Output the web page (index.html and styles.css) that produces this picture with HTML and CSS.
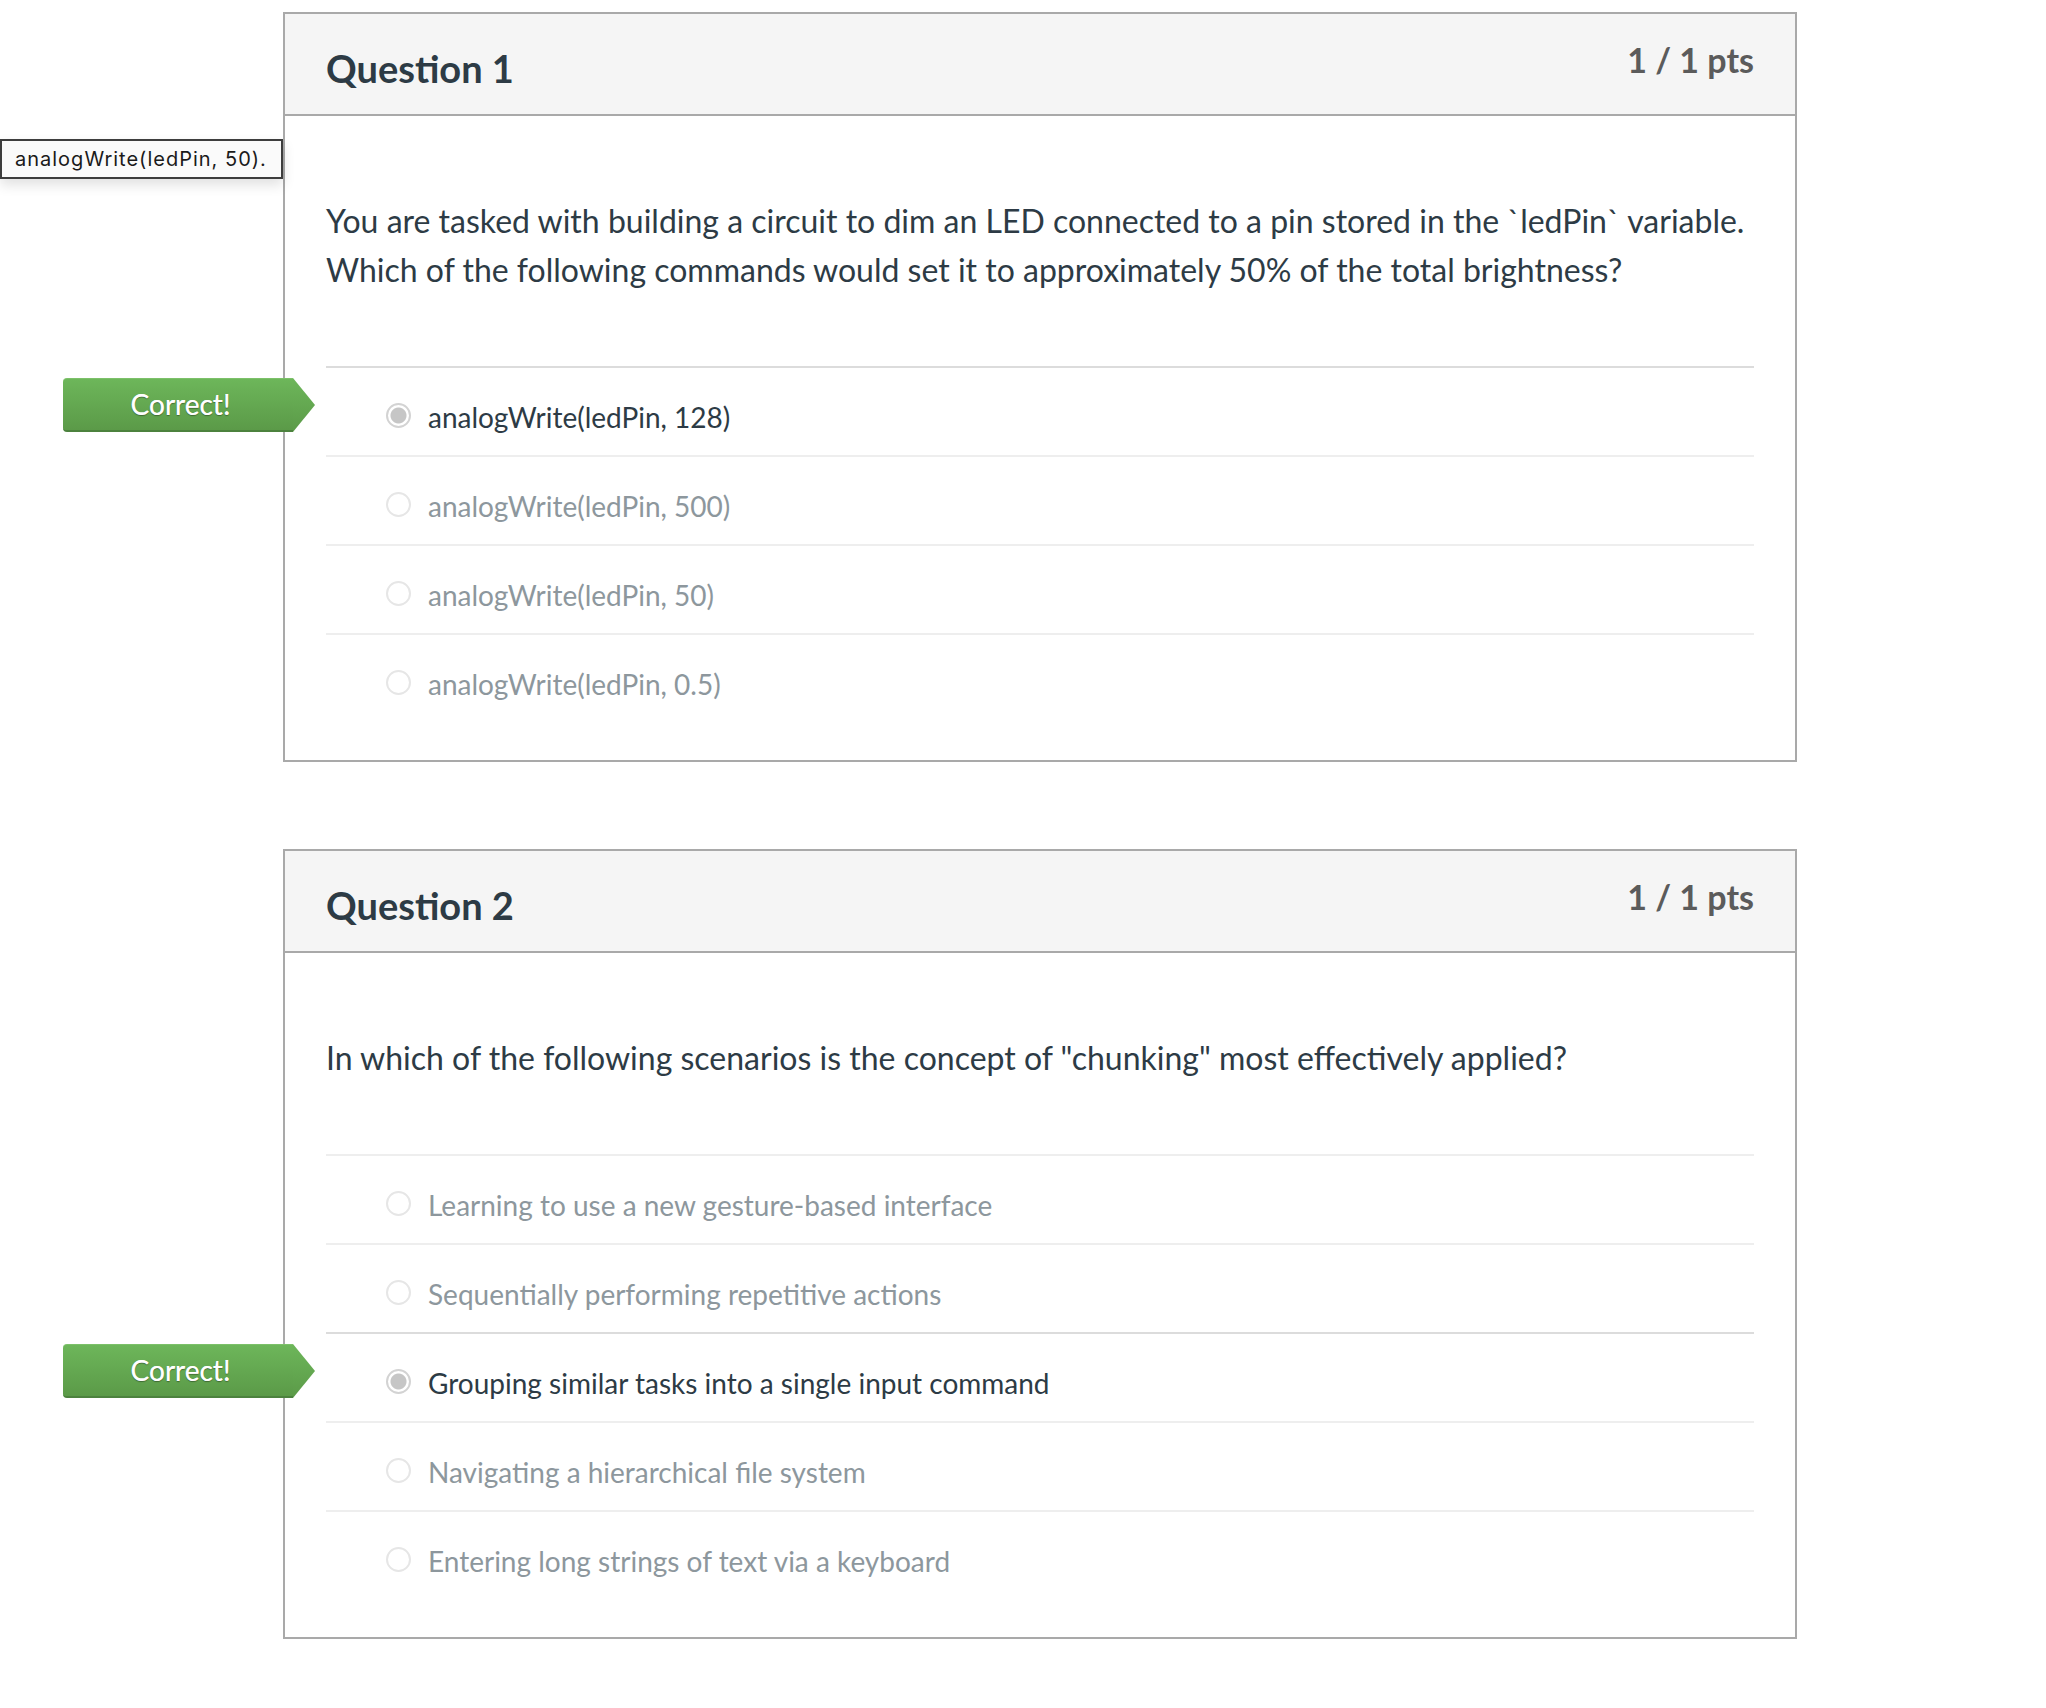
FILE: index.html
```html
<!DOCTYPE html>
<html lang="en">
<head>
<meta charset="utf-8">
<title>Quiz results</title>
<link rel="stylesheet" href="styles.css">
</head>
<body>
<div class="page">
  <div class="tooltip">analogWrite(ledPin, 50).</div>

  <section class="card">
    <header class="card-header">
      <h2 class="title">Question 1</h2>
      <span class="pts">1 / 1 pts</span>
    </header>
    <div class="card-body">
      <p class="qtext">You are tasked with building a circuit to dim an LED connected to a pin stored in the `ledPin` variable.<br>Which of the following commands would set it to approximately 50% of the total brightness?</p>
      <div class="answers">
        <div class="answer selected"><span class="badge">Correct!</span><span class="radio"></span><span class="label">analogWrite(ledPin, 128)</span></div>
        <div class="answer"><span class="radio"></span><span class="label">analogWrite(ledPin, 500)</span></div>
        <div class="answer"><span class="radio"></span><span class="label">analogWrite(ledPin, 50)</span></div>
        <div class="answer"><span class="radio"></span><span class="label">analogWrite(ledPin, 0.5)</span></div>
      </div>
    </div>
  </section>

  <section class="card">
    <header class="card-header">
      <h2 class="title">Question 2</h2>
      <span class="pts">1 / 1 pts</span>
    </header>
    <div class="card-body">
      <p class="qtext">In which of the following scenarios is the concept of "chunking" most effectively applied?</p>
      <div class="answers">
        <div class="answer"><span class="radio"></span><span class="label">Learning to use a new gesture-based interface</span></div>
        <div class="answer"><span class="radio"></span><span class="label">Sequentially performing repetitive actions</span></div>
        <div class="answer selected"><span class="badge">Correct!</span><span class="radio"></span><span class="label">Grouping similar tasks into a single input command</span></div>
        <div class="answer"><span class="radio"></span><span class="label">Navigating a hierarchical file system</span></div>
        <div class="answer"><span class="radio"></span><span class="label">Entering long strings of text via a keyboard</span></div>
      </div>
    </div>
  </section>
</div>
</body>
</html>
```
FILE: styles.css
```css
* { box-sizing: border-box; }

body {
  margin: 0;
  background: #ffffff;
  font-family: Lato, "Open Sans", sans-serif;
  color: #2d3b45;
}

.page {
  position: relative;
  padding: 12px 0 40px 283px;
}

.tooltip {
  position: absolute;
  left: 0;
  top: 139px;
  width: 283px;
  height: 40px;
  padding: 0 0 0 13px;
  border: 2px solid #3d3d3d;
  background: #fafafa;
  box-shadow: 0 6px 12px rgba(0, 0, 0, 0.12);
  font-family: Inter, "Liberation Sans", sans-serif;
  font-size: 20px;
  letter-spacing: 1px;
  line-height: 36px;
  color: #1a1a1a;
  white-space: nowrap;
  z-index: 2;
}

.card {
  width: 1514px;
  border: 2px solid #a9a9a9;
  background: #fff;
}

.card + .card {
  margin-top: 87px;
}

.card-header {
  display: flex;
  justify-content: space-between;
  align-items: flex-start;
  height: 102px;
  padding: 0 41px;
  background: #f5f5f5;
  border-bottom: 2px solid #a9a9a9;
}

.title {
  margin: 0;
  padding-top: 35px;
  font-size: 38px;
  line-height: 38px;
  font-weight: 700;
  color: #2d3b45;
}

.pts {
  padding-top: 29px;
  font-size: 34px;
  line-height: 34px;
  font-weight: 700;
  color: #5b5b5b;
}

.card-body {
  padding: 80px 41px 38px;
}

.qtext {
  margin: 0 0 72px;
  font-size: 32px;
  line-height: 49px;
  color: #2d3b45;
  white-space: nowrap;
}

.answer {
  position: relative;
  display: flex;
  align-items: flex-start;
  padding: 29px 0 18px 60px;
  border-top: 2px solid #eeeeee;
  font-size: 28px;
  line-height: 40px;
  color: #8d979d;
}

.answer.selected {
  border-top-color: #dcdcdc;
  color: #2d3b45;
}

.radio {
  flex: none;
  width: 25px;
  height: 25px;
  margin: 6px 17px 0 0;
  border-radius: 50%;
  border: 2px solid #e6e6e6;
  background: #fff;
}

.answer.selected .radio {
  border-color: #d3d3d3;
  background: radial-gradient(circle, #c6c6c6 0, #c6c6c6 7.5px, #ffffff 8.5px);
}

.badge {
  position: absolute;
  left: -263px;
  top: 10px;
  width: 230px;
  height: 54px;
  padding-left: 5px;
  border-radius: 4px 0 0 4px;
  background: linear-gradient(#6db65a, #5b9a48);
  border-top: 1px solid #7cc169;
  border-bottom: 2px solid #4c823e;
  color: #fff;
  font-size: 28px;
  line-height: 51px;
  text-align: center;
  text-shadow: 0 1px 1px rgba(0, 0, 0, 0.35), 0 0 0.4px #fff;
}

.badge::after {
  content: "";
  position: absolute;
  left: 230px;
  top: -1px;
  width: 22px;
  height: 54px;
  background: linear-gradient(#6db65a, #5b9a48);
  clip-path: polygon(0 0, 100% 50%, 0 100%);
}
```
